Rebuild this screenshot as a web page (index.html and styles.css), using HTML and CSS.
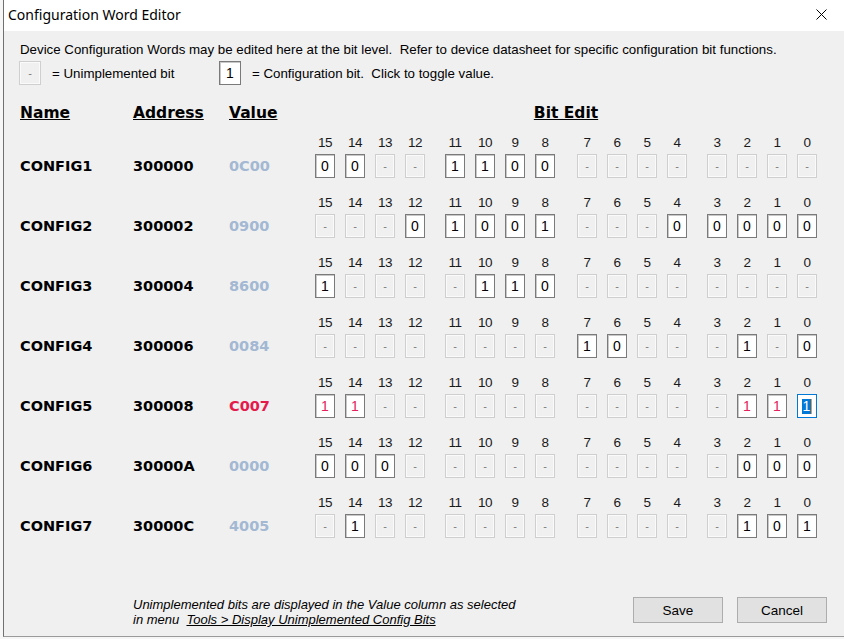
FILE: index.html
```html
<!DOCTYPE html>
<html lang="en">

<head>
  <meta charset="UTF-8">
  <meta name="viewport" content="width=device-width, initial-scale=1.0">
  <title>Configuration Word Editor</title>
  <link rel="stylesheet" href="styles.css">
</head>

<body>
  <div id="editor" class="window">
    <div class="titlebar">
      <span class="title">Configuration Word Editor</span>
      <svg class="close" width="11" height="11" viewBox="0 0 11 11">
        <path d="M0.5 0.5L10.5 10.5M10.5 0.5L0.5 10.5" stroke="#000" stroke-width="1" fill="none" />
      </svg>
    </div>

    <div class="client">
      <p class="intro">Device Configuration Words may be edited here at the bit level.&nbsp; Refer to device datasheet for specific configuration bit functions.</p>

      <div class="legend">
        <div class="legend-item"><span class="bit off">-</span><span>= Unimplemented bit</span></div>
        <div class="legend-item"><span class="bit on">1</span><span>= Configuration bit.&nbsp; Click to toggle value.</span></div>
      </div>

      <div class="head">
        <span class="col-name">Name</span>
        <span class="col-addr">Address</span>
        <span class="col-value">Value</span>
        <span class="col-bits">Bit Edit</span>
      </div>

      <!-- one row per config word, filled in below -->
      <div id="words"></div>

      <div class="footer">
        <p class="note">Unimplemented bits are displayed in the Value column as selected<br>in menu&nbsp; <span class="menu-link">Tools &gt; Display Unimplemented Config Bits</span></p>
        <div class="buttons">
          <button class="btn">Save</button>
          <button class="btn">Cancel</button>
        </div>
      </div>
    </div>
  </div>

  <script>
  document.addEventListener('DOMContentLoaded', function() {
    const words = [
      { name: 'CONFIG1', addr: '300000', mask: 0xCF00, value: 0x0C00 },
      { name: 'CONFIG2', addr: '300002', mask: 0x1F1F, value: 0x0900 },
      { name: 'CONFIG3', addr: '300004', mask: 0x8700, value: 0x8600 },
      { name: 'CONFIG4', addr: '300006', mask: 0x00C5, value: 0x0084 },
      { name: 'CONFIG5', addr: '300008', mask: 0xC007, value: 0xC007, warn: true, sel: 0 },
      { name: 'CONFIG6', addr: '30000A', mask: 0xE007, value: 0x0000 },
      { name: 'CONFIG7', addr: '30000C', mask: 0x4007, value: 0x4005 }
    ];
    const list = document.getElementById('words');

    function hex(v) {
      return ('0000' + v.toString(16).toUpperCase()).slice(-4);
    }

    words.forEach(function(word) {
      const row = document.createElement('div');
      row.className = 'row';
      row.innerHTML =
        '<span class="col-name">' + word.name + '</span>' +
        '<span class="col-addr">' + word.addr + '</span>' +
        '<span class="col-value' + (word.warn ? ' warn' : '') + '">' + hex(word.value) + '</span>';
      const valueCell = row.querySelector('.col-value');

      const bits = document.createElement('div');
      bits.className = 'bits';
      for (let n = 3; n >= 0; n--) {
        const nibble = document.createElement('div');
        nibble.className = 'nibble';
        for (let b = n * 4 + 3; b >= n * 4; b--) {
          const cell = document.createElement('div');
          cell.className = 'cell';
          const label = document.createElement('span');
          label.className = 'bit-no';
          label.textContent = b;
          const box = document.createElement('span');
          if (word.mask & (1 << b)) {
            box.className = 'bit on' + (word.warn ? ' warn' : '');
            const digit = (word.value >> b) & 1;
            if (word.sel === b) {
              box.classList.add('sel');
              box.innerHTML = '<span class="hl">' + digit + '</span>';
            } else {
              box.textContent = digit;
            }
            box.addEventListener('click', function() {
              word.value ^= (1 << b);
              box.textContent = (word.value >> b) & 1;
              valueCell.textContent = hex(word.value);
            });
          } else {
            box.className = 'bit off';
            box.textContent = '-';
          }
          cell.appendChild(label);
          cell.appendChild(box);
          nibble.appendChild(cell);
        }
        bits.appendChild(nibble);
      }
      row.appendChild(bits);
      list.appendChild(row);
    });
  });
  </script>
</body>

</html>
```

FILE: styles.css
```css
* {
  box-sizing: border-box;
}

body {
  margin: 0;
  background-color: #f6f6f6;
  font-family: "Liberation Sans", Arial, sans-serif;
  color: #000;
}

.window {
  margin-left: 3px;
  width: 841px;
  height: 637px;
  border-left: 1px solid #707070;
  border-bottom: 1px solid #9a9a9a;
  background-color: #f0f0f0;
  display: flex;
  flex-direction: column;
}

.titlebar {
  height: 31px;
  background-color: #fff;
  display: flex;
  align-items: center;
  justify-content: space-between;
  padding: 0 17px 2px 4px;
}

.title {
  font-family: "Noto Sans", sans-serif;
  font-size: 14px;
}

.client {
  flex: 1;
  display: flex;
  flex-direction: column;
  padding: 11px 17px 0 16px;
}

.intro {
  margin: 0;
  font-size: 13.3px;
  line-height: 16px;
  white-space: nowrap;
}

.legend {
  display: flex;
  align-items: center;
  height: 24px;
  margin-top: 3px;
  margin-left: -1px;
  font-size: 13.3px;
  white-space: nowrap;
}

.legend-item {
  display: flex;
  align-items: center;
  gap: 11px;
  width: 200px;
  flex: none;
}

.legend-item:last-child {
  width: auto;
}

.legend .bit {
  width: 22px;
}

.head {
  display: flex;
  margin-top: 19px;
  font-family: "DejaVu Sans", sans-serif;
  font-weight: bold;
  font-size: 15.5px;
  line-height: 18px;
  text-decoration: underline;
}

.col-name {
  width: 113px;
}

.col-addr {
  width: 96px;
}

.col-value {
  width: 86px;
}

.col-bits {
  width: 502px;
  text-align: center;
}

#words {
  margin-top: 13px;
}

.row {
  display: flex;
  align-items: flex-end;
  height: 43px;
  margin-bottom: 17px;
}

.row .col-name,
.row .col-addr,
.row .col-value {
  height: 24px;
  line-height: 24px;
  font-family: "DejaVu Sans", sans-serif;
  font-weight: bold;
  font-size: 14.5px;
}

.row .col-value {
  color: #a3b8d3;
}

.row .col-value.warn {
  color: #e51a4c;
}

.bits {
  display: flex;
  gap: 20px;
}

.nibble {
  display: flex;
  gap: 10px;
}

.nibble:nth-child(3) {
  margin-left: 2px;
}

.cell {
  display: flex;
  flex-direction: column;
  align-items: center;
  width: 20px;
}

.bit-no {
  font-size: 13.5px;
  line-height: 16px;
  letter-spacing: -0.5px;
  margin-bottom: 3px;
  color: #1a1a1a;
}

.bit {
  width: 20px;
  height: 24px;
  display: flex;
  align-items: center;
  justify-content: center;
  font-size: 14px;
}

.bit.on {
  background-color: #fff;
  border: 1px solid #7a7a7a;
  box-shadow: inset 1px 1px 0 #c8c8c8;
  cursor: pointer;
}

.bit.on.warn {
  color: #e4215a;
}

.bit.off {
  background-color: #f0f0f0;
  border: 1px solid #cfcfcf;
  box-shadow: inset 0 0 0 1px #fafafa;
  color: #7a7a7a;
  font-size: 11px;
}

.bit.sel {
  border-color: #0078d7;
  box-shadow: none;
}

.hl {
  background-color: #0078d7;
  color: #fff;
  line-height: 15px;
  padding: 0 1px;
  border-right: 1px solid #e59a3a;
}

.footer {
  display: flex;
  align-items: flex-start;
  margin-top: 42px;
}

.note {
  margin: 0 0 0 113px;
  font-style: italic;
  font-size: 13px;
  line-height: 15px;
}

.menu-link {
  text-decoration: underline;
}

.buttons {
  display: flex;
  gap: 14px;
  margin-left: auto;
}

.btn {
  width: 90px;
  height: 26px;
  background-color: #e1e1e1;
  border: 1px solid #adadad;
  font-family: "Liberation Sans", Arial, sans-serif;
  font-size: 13.5px;
  color: #000;
  padding: 0;
}
```
